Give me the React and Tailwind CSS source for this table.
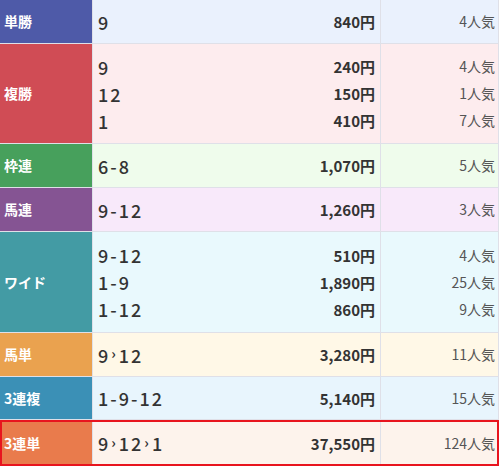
import React from 'react'

const ROWS = [
    { label: '単勝', h: 'h-[44px]', head: 'bg-[#4e5aa8]', body: 'bg-[#eaf1fd]', lines: [['9', '840円', '4人気']] },
    {
        label: '複勝', h: 'h-[100px]', head: 'bg-[#d04c55]', body: 'bg-[#fdecee]', lines: [
            ['9', '240円', '4人気'],
            ['12', '150円', '1人気'],
            ['1', '410円', '7人気'],
        ],
    },
    { label: '枠連', h: 'h-[44px]', head: 'bg-[#47a05c]', body: 'bg-[#effcec]', lines: [['6-8', '1,070円', '5人気']] },
    { label: '馬連', h: 'h-[44px]', head: 'bg-[#855493]', body: 'bg-[#f8e9fa]', lines: [['9-12', '1,260円', '3人気']] },
    {
        label: 'ワイド', h: 'h-[101px]', head: 'bg-[#439ba4]', body: 'bg-[#e9f9fd]', lines: [
            ['9-12', '510円', '4人気'],
            ['1-9', '1,890円', '25人気'],
            ['1-12', '860円', '9人気'],
        ],
    },
    { label: '馬単', h: 'h-[44px]', head: 'bg-[#eaa24f]', body: 'bg-[#fff8e7]', lines: [['9>12', '3,280円', '11人気']] },
    { label: '3連複', h: 'h-[43px]', head: 'bg-[#3b90b6]', body: 'bg-[#e8f5fd]', lines: [['1-9-12', '5,140円', '15人気']] },
    { label: '3連単', h: 'h-[46px]', head: 'bg-[#e97b4c]', body: 'bg-[#fdf3ec]', lines: [['9>12>1', '37,550円', '124人気']], hit: true },
]

// "9>12" -> numbers with a small arrow between, "9-12" -> hyphen
function Combo({ text }) {
    const parts = text.split(/([->])/)
    return (
        <span className="tracking-[2px] flex items-center">
            {parts.map((p, i) =>
                p === '>' ? (
                    <span key={i} className="text-[14px] font-bold mx-[1px] -mt-[3px]">›</span>
                ) : (
                    <span key={i}>{p}</span>
                )
            )}
        </span>
    )
}

export default function App() {
    return (
        <div
            className="w-[499px] bg-white text-[#333]"
            style={{ fontFamily: '"Noto Sans CJK JP", "Noto Sans", sans-serif' }}
        >
            {ROWS.map((row) => (
                <div
                    key={row.label}
                    className={`grid grid-cols-[93px_288px_118px] border-b border-[#dfe0e8] ${row.h} ${
                        row.hit ? 'border-b-0 outline-2 outline-offset-[-2px] outline-[#e8141e]' : ''
                    }`}
                >
                    <div className={`${row.head} border-r border-[#dfe0e8] flex items-center pl-[4px] text-white font-bold text-[14px]`}>
                        {row.label}
                    </div>
                    <div className={`${row.body} border-r border-[#dfe0e8] flex flex-col justify-center`}>
                        {row.lines.map((l, i) => (
                            <div key={i} className="h-[27px] flex items-center justify-between pl-[5px] pr-[5px]">
                                <span className="text-[18px] font-medium leading-none"><Combo text={l[0]} /></span>
                                <span className="text-[15px] font-bold leading-none">{l[1]}</span>
                            </div>
                        ))}
                    </div>
                    <div className={`${row.body} border-r border-[#dfe0e8] flex flex-col justify-center`}>
                        {row.lines.map((l, i) => (
                            <div key={i} className="h-[27px] flex items-center justify-end pr-[3px] text-[14px] text-[#555]">
                                {l[2]}
                            </div>
                        ))}
                    </div>
                </div>
            ))}
        </div>
    )
}
